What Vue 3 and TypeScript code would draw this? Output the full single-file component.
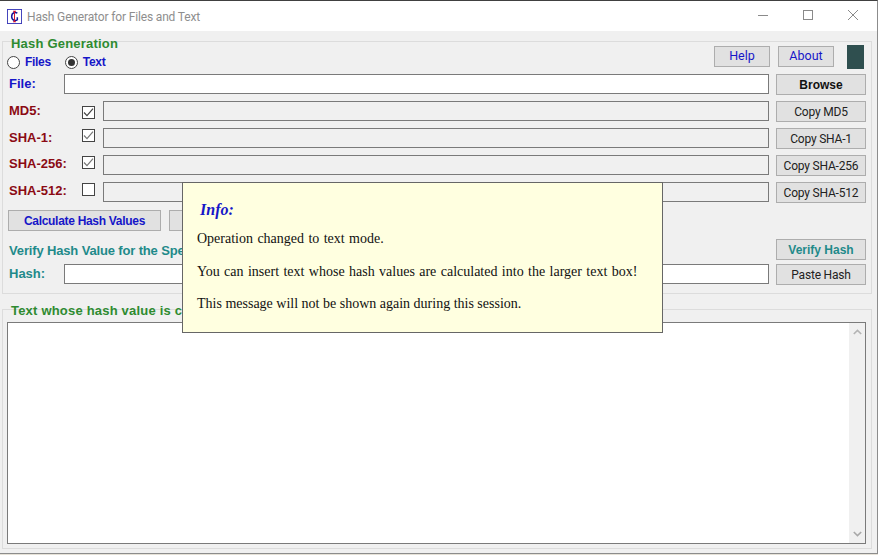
<script setup lang="ts">
interface HashRow {
  name: string;
  checked: boolean;
}

const hashRows: HashRow[] = [
  { name: 'MD5', checked: true },
  { name: 'SHA-1', checked: true },
  { name: 'SHA-256', checked: true },
  { name: 'SHA-512', checked: false },
];
</script>

<template>
  <div class="window">
    <header class="titlebar">
      <svg class="logo" width="15" height="15" viewBox="0 0 16 16">
        <rect x="0.5" y="0.5" width="15" height="15" fill="#fff" stroke="#3a3ab8" />
        <path d="M11 4.6C9.4 3 5 3.4 5 8s4.4 5 6 3.4V8.8" fill="none" stroke="#14149a" stroke-width="1.6" />
        <path d="M8 2.5v11M6.4 2.5h3.2M6.4 13.5h3.2" stroke="#d01030" stroke-width="1.1" />
      </svg>
      <span class="title">Hash Generator for Files and Text</span>
      <div class="controls">
        <svg width="12" height="12" viewBox="0 0 12 12"><path d="M1 6.5h10" stroke="#8a8a8a" /></svg>
        <svg width="12" height="12" viewBox="0 0 12 12"><rect x="1.5" y="1.5" width="9" height="9" fill="none" stroke="#8a8a8a" /></svg>
        <svg width="12" height="12" viewBox="0 0 12 12"><path d="M1 1l10 10M11 1L1 11" stroke="#8a8a8a" /></svg>
      </div>
    </header>

    <main class="body">
      <section class="group generation">
        <div class="legend green">Hash Generation</div>
        <div class="mode-row">
          <div class="radios">
            <label class="radio blue"><span class="dot"></span>Files</label>
            <label class="radio blue"><span class="dot on"></span>Text</label>
          </div>
          <div class="top-actions">
            <button class="btn small link">Help</button>
            <button class="btn small link">About</button>
            <span class="swatch"></span>
          </div>
        </div>

        <div class="row plain">
          <span class="label blue">File:</span>
          <div class="field"></div>
          <button class="btn side strong">Browse</button>
        </div>

        <div v-for="(row, i) in hashRows" :key="row.name" class="row">
          <span class="label red" :class="{ raised: i > 1 }">{{ row.name }}:</span>
          <span class="check" :class="{ first: i === 0 }">
            <svg v-if="row.checked" width="11" height="11" viewBox="0 0 11 11">
              <path d="M1 5.5l3 3.2L10 1.6" fill="none" :stroke="i === 0 ? '#444' : '#777'" stroke-width="1.2" />
            </svg>
          </span>
          <div class="field readonly"></div>
          <button class="btn side">Copy {{ row.name }}</button>
        </div>

        <div class="calc-row">
          <button class="btn calc">Calculate Hash Values</button>
          <button class="btn calc second"></button>
        </div>

        <div class="verify-row">
          <span class="verify-text teal">Verify Hash Value for the Specified File</span>
          <button class="btn side teal-btn">Verify Hash</button>
        </div>

        <div class="row plain last">
          <span class="label teal">Hash:</span>
          <div class="field"></div>
          <button class="btn side">Paste Hash</button>
        </div>
      </section>

      <section class="group text-group">
        <div class="legend green">Text whose hash value is calculated</div>
        <div class="textbox">
          <div class="scrollbar">
            <svg width="9" height="6" viewBox="0 0 9 6"><path d="M0.8 5L4.5 1.4 8.2 5" fill="none" stroke="#b4b4b4" stroke-width="1.6" /></svg>
            <svg width="9" height="6" viewBox="0 0 9 6"><path d="M0.8 1L4.5 4.6 8.2 1" fill="none" stroke="#a8a8a8" stroke-width="1.6" /></svg>
          </div>
        </div>
      </section>
    </main>

    <aside class="popup">
      <h2>Info:</h2>
      <p>Operation changed to text mode.</p>
      <p>You can insert text whose hash values are calculated into the larger text box!</p>
      <p class="tight">This message will not be shown again during this session.</p>
    </aside>
  </div>
</template>

<style>
body {
  background: #e6e2d8;
}
</style>

<style scoped>
.window {
  position: relative;
  width: 878px;
  height: 554px;
  box-sizing: border-box;
  border-top: 1px solid #404040;
  border-right: 1px solid #8c8c8c;
  border-bottom: 1px solid #8c8c8c;
  background: #f0f0f0;
  overflow: hidden;
  font-family: "Liberation Sans", Arial, sans-serif;
}

.titlebar {
  height: 30px;
  background: #fff;
  display: flex;
  align-items: center;
  padding-left: 7px;
}

.logo {
  margin-right: 5px;
}

.title {
  font-family: Roboto, sans-serif;
  font-size: 12px;
  letter-spacing: -0.15px;
  margin-top: 1px;
  color: #8e8e8e;
}

.controls {
  margin-left: auto;
  display: flex;
  gap: 33px;
  margin-right: 18px;
  margin-bottom: 2px;
}

.body {
  padding: 10px 5px 0 2px;
  display: flex;
  flex-direction: column;
  gap: 15px;
}

.group {
  border: 1px solid #dcdcdc;
  padding: 0 5px;
}

.generation {
  height: 253px;
  box-sizing: border-box;
}

.legend {
  font-weight: bold;
  font-size: 13px;
  line-height: 15px;
  margin: -6px 0 0 3px;
  letter-spacing: 0.2px;
  white-space: nowrap;
}

.green {
  color: #2e8b30;
}

.blue {
  color: #1616c8;
}

.red {
  color: #8b0a14;
}

.teal {
  color: #1f8a8a;
}

.mode-row {
  height: 28px;
  margin-top: -6px;
  display: flex;
  justify-content: space-between;
  align-items: flex-start;
}

.radios {
  display: flex;
  gap: 14px;
  margin: 10px 0 0 -1px;
}

.radio {
  display: flex;
  align-items: center;
  gap: 5px;
  font-weight: bold;
  font-size: 12px;
  line-height: 14px;
  letter-spacing: -0.3px;
}

.dot {
  width: 11px;
  height: 11px;
  border: 1px solid #444;
  border-radius: 50%;
  background: #fff;
  display: flex;
  align-items: center;
  justify-content: center;
}

.dot.on::after {
  content: "";
  width: 7px;
  height: 7px;
  border-radius: 50%;
  background: #333;
}

.top-actions {
  display: flex;
  align-items: flex-start;
  margin-right: 2px;
}

.top-actions .btn + .btn {
  margin-left: 8px;
}

.swatch {
  width: 17px;
  height: 24px;
  margin-left: 13px;
  background: #2f4f4f;
}

.btn {
  box-sizing: border-box;
  padding: 0;
  border: 1px solid #adadad;
  background: #e1e1e1;
  color: #222;
  font-family: Roboto, sans-serif;
  font-size: 12px;
  letter-spacing: -0.2px;
  line-height: 1;
}

.btn.small {
  width: 56px;
  height: 21px;
  margin-top: 1px;
}

.btn.link {
  color: #1616c8;
  font-size: 12.5px;
  letter-spacing: 0;
}

.row {
  display: grid;
  grid-template-columns: 74px 21px 1fr 90px;
  align-items: center;
  height: 20px;
  margin-bottom: 7px;
}

.row.plain {
  grid-template-columns: 56px 1fr 90px;
}

.row.last {
  margin-bottom: 0;
}

.label {
  font-weight: bold;
  font-size: 13px;
  margin: 0 0 2px 1px;
  white-space: nowrap;
}

.label.raised {
  margin-bottom: 4px;
}

.check {
  width: 11px;
  height: 11px;
  border: 1px solid #444;
  background: #fff;
  margin-bottom: 6px;
  display: flex;
  align-items: center;
  justify-content: center;
}

.check.first {
  margin: 2px 0 0;
}

.field {
  box-sizing: border-box;
  height: 20px;
  border: 1px solid #7a7a7a;
  background: #fff;
  margin-right: 7px;
}

.field.readonly {
  background: #f0f0f0;
}

.side {
  width: 90px;
  height: 21px;
  margin-top: 1px;
}

.btn.strong {
  font-family: "Liberation Sans", Arial, sans-serif;
  font-weight: bold;
  letter-spacing: 0;
  color: #111;
}

.btn.teal-btn {
  font-family: "Liberation Sans", Arial, sans-serif;
  font-weight: bold;
  letter-spacing: 0;
  color: #1f8a8a;
}

.calc-row {
  display: flex;
  gap: 8px;
  margin-top: 9px;
}

.btn.calc {
  width: 153px;
  height: 21px;
  font-family: "Liberation Sans", Arial, sans-serif;
  font-weight: bold;
  color: #1616c8;
  letter-spacing: -0.3px;
}

.btn.second {
  width: 60px;
}

.verify-row {
  display: flex;
  justify-content: space-between;
  align-items: flex-start;
  height: 25px;
  margin-top: 7px;
}

.verify-text {
  font-weight: bold;
  font-size: 13px;
  letter-spacing: -0.15px;
  margin: 5px 0 0 1px;
  white-space: nowrap;
}

.text-group {
  padding: 0 5px 0 4px;
  height: 240px;
  box-sizing: border-box;
}

.text-group .legend {
  margin: -7px 0 0 4px;
}

.textbox {
  box-sizing: border-box;
  height: 222px;
  margin-top: 4px;
  border: 1px solid #7a7a7a;
  background: #fff;
  display: flex;
  justify-content: flex-end;
}

.scrollbar {
  width: 16px;
  background: #f0f0f0;
  display: flex;
  flex-direction: column;
  justify-content: space-between;
  align-items: center;
  padding: 6px 0;
  box-sizing: border-box;
}

.popup {
  position: absolute;
  left: 182px;
  top: 181px;
  width: 481px;
  height: 151px;
  box-sizing: border-box;
  border: 1px solid #666;
  background: #ffffe0;
  padding: 18px 14px 0;
  font-family: "Liberation Serif", "Times New Roman", serif;
  font-size: 14px;
  color: #111;
}

.popup h2 {
  margin: 0 0 12px 3px;
  font-size: 16px;
  line-height: 18px;
  font-style: italic;
  font-weight: bold;
  color: #1616c8;
}

.popup p {
  margin: 0 0 16.5px;
  line-height: 16px;
  word-spacing: 0.9px;
}

.popup p.tight {
  word-spacing: 0;
}
</style>
